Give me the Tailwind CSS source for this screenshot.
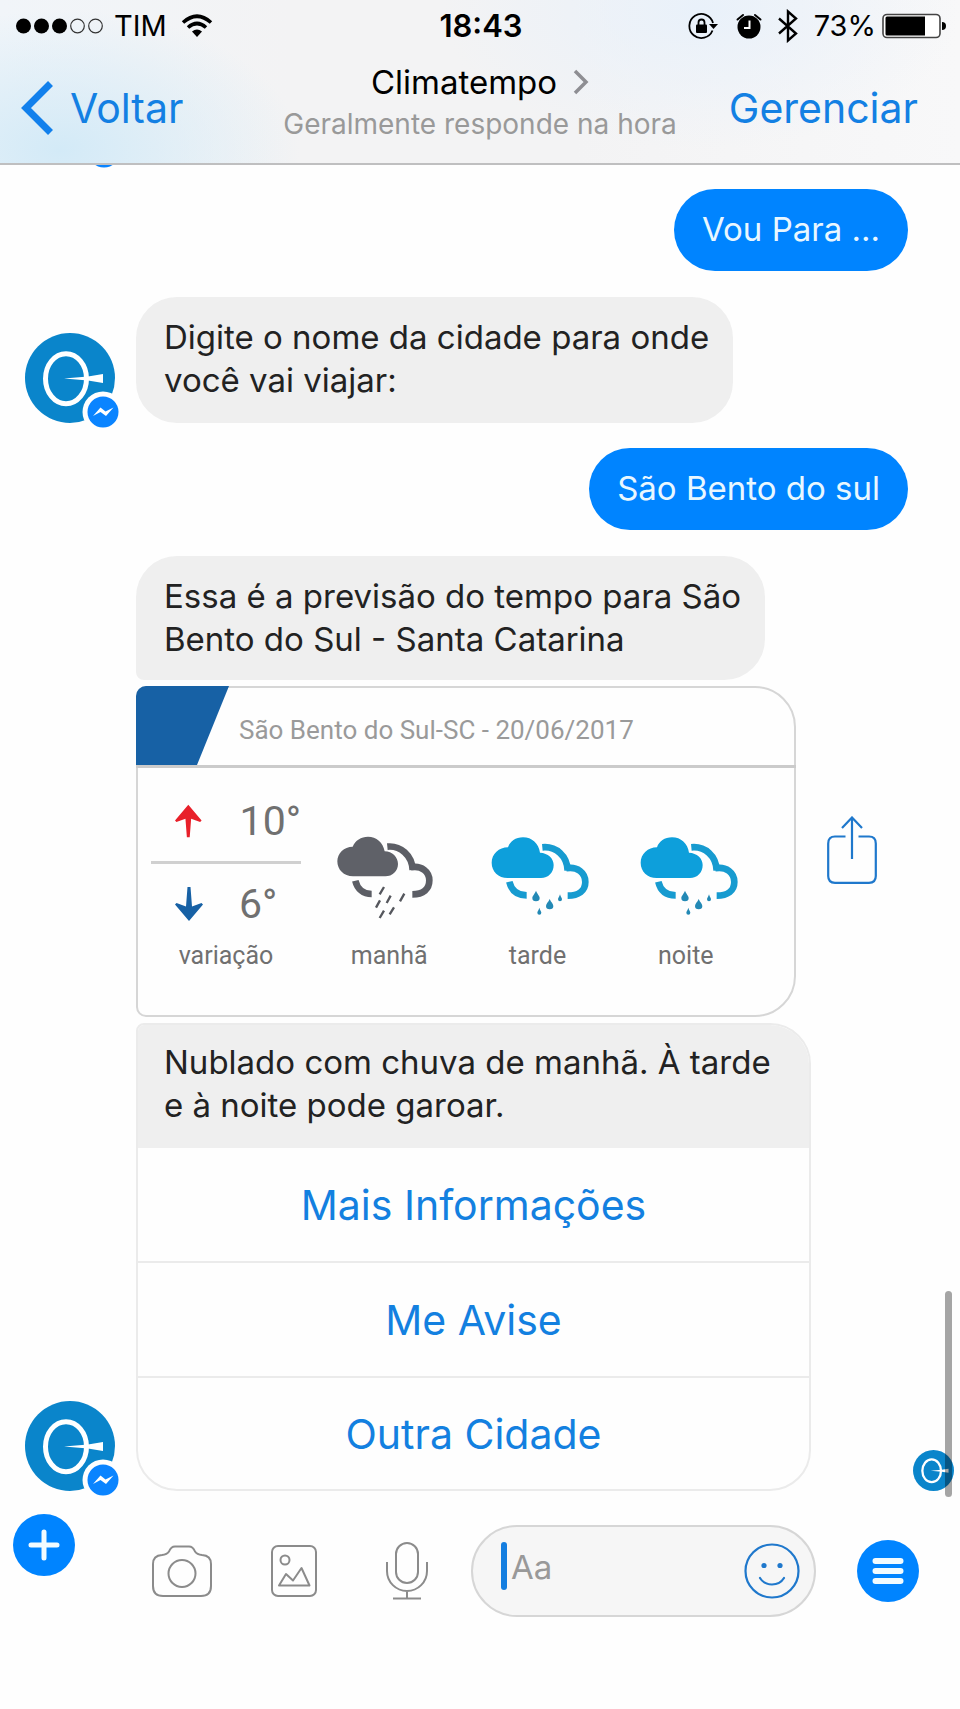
<!DOCTYPE html>
<html lang="pt-BR">
<head>
<meta charset="utf-8">
<meta name="viewport" content="width=device-width, initial-scale=1">
<title>Climatempo</title>
<script src="https://cdn.jsdelivr.net/npm/@tailwindcss/browser@4"></script>
</head>
<body class="bg-[#fefefe] font-['Inter','Liberation_Sans',sans-serif] text-[#222]">
<svg class="hidden" aria-hidden="true">
  <symbol id="logo" viewBox="0 0 90 90">
    <circle cx="45" cy="45" r="45" fill="#0a85cb"/>
    <ellipse cx="41" cy="45.700" rx="20.500" ry="25" fill="none" stroke="#fff" stroke-width="5"/>
    <path d="M39 45.500 63 43.500 78 41V50L63 47.500Z" fill="#fff"/>
  </symbol>
  <symbol id="messenger" viewBox="0 0 42 42">
    <circle cx="21" cy="21" r="20.500" fill="#fefefe"/>
    <circle cx="21" cy="21" r="15.500" fill="#0a84ff"/>
    <path d="M11 25 18.500 16.500 23.500 20.500 31.500 16.500 24 25 18.500 21Z" fill="#fff"/>
  </symbol>
  <symbol id="drizzle" viewBox="90 462 300 240">
    <path fill="#0d9fdb" d="M143 588C115 588 95 568 95 542C95 516 117 496 144 496C150 478 167 466 189 466C216 466 236 484 240 512C264 513 281 529 281 549C281 572 265 588 243 588Z"/>
    <g fill="none" stroke="#179bd0" stroke-width="20">
      <path d="M247 496C288 492 322 522 323 566"/>
      <path d="M318 559C352 552 376 573 376 600C376 626 356 641 323 641"/>
      <path d="M148 599C154 625 172 640 200 640"/>
    </g>
    <g fill="#2389b5">
      <path d="M228 626C232 637 239 641 239 648A11 10 0 0 1 217 648C217 641 224 637 228 626Z"/>
      <path d="M269 651C273 661 280 665 280 672A11 10 0 0 1 258 672C258 665 265 661 269 651Z"/>
      <path d="M300 637C302 645 306 648 306 652A6 6 0 0 1 294 652C294 648 298 645 300 637Z"/>
      <path d="M238 677C240 685 244 688 244 692A6 6 0 0 1 232 692C232 688 236 685 238 677Z"/>
    </g>
  </symbol>
</svg>

<div class="flex min-h-screen flex-col">
  <header class="relative z-10 border-b-2 border-[#bfbfc0] bg-[radial-gradient(ellipse_240px_140px_at_60px_150px,#d3eaf7,transparent),radial-gradient(ellipse_260px_140px_at_700px_10px,#e9f1fa,transparent),linear-gradient(90deg,#f1f5f9,#f3f3f4_30%,#f3f3f4_60%,#f8f8f9)]">
    <div class="grid h-[52px] grid-cols-[1fr_auto_1fr] items-center pr-[14px] pl-4 text-[29px] leading-8 text-black">
      <div class="flex items-center gap-[10px]">
        <svg class="h-4 w-[88px]" viewBox="0 0 88 16" aria-hidden="true"><g fill="#000"><circle cx="7.500" cy="8" r="7.500"/><circle cx="25.500" cy="8" r="7.500"/><circle cx="43.500" cy="8" r="7.500"/></g><g fill="none" stroke="#333" stroke-width="1.200"><circle cx="61.500" cy="8" r="6.800"/><circle cx="79.500" cy="8" r="6.800"/></g></svg>
        <span>TIM</span>
        <svg class="ml-1 h-[24px] w-[32px]" viewBox="0 0 32 24" fill="none" stroke="#000" stroke-width="3.600" aria-hidden="true"><path d="M2 8.500Q16-4 30 8.500M7 13.500Q16 5.500 25 13.500"/><path d="M11 17.500Q16 13.500 21 17.500L16 23Z" fill="#000" stroke="none"/></svg>
      </div>
      <span class="text-[31px] font-semibold">18:43</span>
      <div class="flex items-center justify-end">
        <svg class="mr-[18px] h-[28px] w-[30px]" viewBox="0 0 30 28" aria-hidden="true"><path d="M24.500 18.500A12 12 0 1 1 25 11" fill="none" stroke="#000" stroke-width="1.800"/><path d="M21 12h9l-4.500 5z"/><rect x="8" y="12.500" width="11" height="8.500" rx="1"/><path d="M10.500 13v-2.500a3 3 0 0 1 6 0V13" fill="none" stroke="#000" stroke-width="1.800"/></svg>
        <svg class="mr-4 h-[26px] w-[26px]" viewBox="0 0 26 26" aria-hidden="true"><circle cx="13" cy="14" r="11.500"/><path d="M13.500 7.500V15H8" fill="none" stroke="#fff" stroke-width="2"/><path d="M1.500 6.500 7 2M24.500 6.500 19 2" stroke="#000" stroke-width="2" stroke-linecap="round"/></svg>
        <svg class="mr-4 h-[34px] w-[20px]" viewBox="0 0 20 34" fill="none" stroke="#000" stroke-width="2.400" aria-hidden="true"><path d="M1 9.500 18 24.500 10 31.500V2.500L18 9.500 1 24.500"/></svg>
        <span>73%</span>
        <svg class="ml-[6px] h-[26px] w-[64px]" viewBox="0 0 64 26" aria-hidden="true"><rect x="1" y="1.500" width="57" height="23" rx="4" fill="#fff" stroke="#444" stroke-width="1.600"/><path d="M3.500 5q0-1.500 1.500-1.500H43V22.500H5q-1.500 0-1.500-1.500z"/><path d="M60 9q4 0 4 4t-4 4z"/></svg>
      </div>
    </div>
    <div class="grid h-[111px] grid-cols-[1fr_auto_1fr] items-start">
      <button type="button" class="mt-[28px] ml-[21px] flex items-center gap-[17px] justify-self-start text-[41px] leading-[52px] text-[#1380e3]">
        <svg class="h-[56px] w-[32px]" viewBox="0 0 32 56" fill="none" stroke="#1280ec" stroke-width="7" aria-hidden="true"><path d="M29.500 3.500 5 28 29.500 52.500"/></svg>Voltar
      </button>
      <div class="mt-[9px] flex flex-col items-center">
        <a href="#" class="flex items-center gap-4 text-[33px] leading-[42px] text-black">Climatempo
          <svg class="h-[26px] w-[16px]" viewBox="0 0 16 26" fill="none" stroke="#8e8e93" stroke-width="3.500" aria-hidden="true"><path d="M2 2 13 13 2 24"/></svg>
        </a>
        <p class="text-[28px] leading-[42px] text-[#999]">Geralmente responde na hora</p>
      </div>
      <button type="button" class="mt-[28px] mr-[42px] justify-self-end text-[41px] leading-[56px] text-[#1380e3]">Gerenciar</button>
    </div>
  </header>

  <main class="relative flex flex-col text-[33px] leading-[43px]">
    <svg class="absolute -top-[34px] left-[83px] h-[42px] w-[42px]" aria-hidden="true"><use href="#messenger"/></svg>

    <p class="mt-6 mr-[52px] self-end rounded-[41px] bg-[#0084ff] px-[28px] pt-[19px] pb-[20px] text-[#e9f7ff]">Vou Para ...</p>

    <div class="mt-[26px] flex items-end gap-[21px] pl-[25px]">
      <div class="relative h-[90px] w-[90px] shrink-0">
        <svg class="h-full w-full" role="img" aria-label="Climatempo"><use href="#logo"/></svg>
        <svg class="absolute -right-[9px] -bottom-[10px] h-[42px] w-[42px]" aria-hidden="true"><use href="#messenger"/></svg>
      </div>
      <p class="rounded-[41px] bg-[#efefef] pr-[24px] pl-[28px] pt-[19px] pb-[21px]">Digite o nome da cidade para onde<br>você vai viajar:</p>
    </div>

    <p class="mt-[25px] mr-[52px] self-end rounded-[41px] bg-[#0084ff] px-[28px] pt-[19px] pb-[20px] text-[#e9f7ff]">São Bento do sul</p>

    <div class="mt-[26px] flex items-end gap-[21px] pl-[25px]">
      <div class="relative h-[90px] w-[90px] shrink-0">
        <svg class="h-full w-full" role="img" aria-label="Climatempo"><use href="#logo"/></svg>
        <svg class="absolute -right-[9px] -bottom-[10px] h-[42px] w-[42px]" aria-hidden="true"><use href="#messenger"/></svg>
      </div>
      <div class="flex min-w-0 flex-1 flex-col items-start gap-[6px]">
        <p class="rounded-[41px] rounded-bl-[8px] bg-[#efefef] pr-[24px] pl-[28px] pt-[19px] pb-[19px]">Essa é a previsão do tempo para São<br>Bento do Sul - Santa Catarina</p>

        <div class="flex w-full items-center gap-[31px]">
          <section class="w-full max-w-[660px] rounded-l-[10px] rounded-r-[41px] border-2 border-[#d6d6d6] font-['Roboto','Liberation_Sans',sans-serif]">
            <div class="-mx-[2px] -mt-[2px] flex h-[82px] items-center border-b-3 border-[#cbcbcb]">
              <svg class="h-[79px] w-[93px] shrink-0 rounded-tl-[10px]" viewBox="0 0 93 79" aria-hidden="true"><path d="M0 0H93L61 79H0Z" fill="#1761a5"/></svg>
              <h2 class="pt-[8px] pl-[10px] text-[26px] leading-8 text-[#9a9a9a]">São Bento do Sul-SC - 20/06/2017</h2>
            </div>
            <div class="flex h-[247px] items-start pr-[34px] pl-[13px] text-[25px] leading-8 text-[#707070]">
              <div class="mr-[14px] w-[150px] shrink-0">
                <div class="flex h-[96px] items-center gap-[38px] border-b-3 border-[#d0d0d0] pt-[13px] pl-[24px] text-[41px]">
                  <svg class="h-[34px] w-[28px]" viewBox="0 0 28 34" fill="#e8202a" aria-hidden="true"><path d="M14 0 28 16.500 26.500 18 17 14.500 15.500 34H12.500L11 14.500 1.500 18 0 16.500Z"/></svg>10°
                </div>
                <div class="flex h-[76px] items-center gap-[36px] pt-[3px] pl-[24px] text-[41px]">
                  <svg class="h-[34px] w-[28px]" viewBox="0 0 28 34" fill="#1761a5" aria-hidden="true"><path d="M14 34 28 17.500 26.500 16 17 19.500 15.500 0H12.500L11 19.500 1.500 16 0 17.500Z"/></svg>6°
                </div>
                <p class="text-center">variação</p>
              </div>
              <div class="grid flex-1 grid-cols-3 pt-[68px] text-center">
                <figure class="flex flex-col items-center gap-[20px]">
                  <svg class="h-[84px] w-[106px]" viewBox="649 227 318 252" aria-hidden="true">
                    <path fill="#5f6168" d="M700 348C672 348 653 328 653 303C653 279 673 259 699 259C707 240 724 229 745 229C770 229 790 246 795 273C818 273 835 291 835 311C835 332 818 348 797 348Z"/>
                    <g fill="none" stroke="#5c5e65" stroke-width="20"><path d="M803 259C842 255 877 285 879 329"/><path d="M873 321C906 314 929 335 929 360C929 386 911 402 878 402"/><path d="M707 361C713 386 731 401 756 401"/></g>
                    <path stroke="#55575d" stroke-width="7" d="M793 380 780 402M813 406 801 428M781 420 769 442M854 400 841 423M793 451 780 473M823 441 810 462"/>
                  </svg>
                  <figcaption>manhã</figcaption>
                </figure>
                <figure class="flex flex-col items-center gap-[24px]">
                  <svg class="ml-[6px] h-[80px] w-[100px]" aria-hidden="true"><use href="#drizzle"/></svg>
                  <figcaption>tarde</figcaption>
                </figure>
                <figure class="flex flex-col items-center gap-[24px]">
                  <svg class="ml-[6px] h-[80px] w-[100px]" aria-hidden="true"><use href="#drizzle"/></svg>
                  <figcaption>noite</figcaption>
                </figure>
              </div>
            </div>
          </section>
          <button type="button" aria-label="Compartilhar" class="shrink-0 pb-[4px]">
            <svg class="h-[68px] w-[50px]" viewBox="0 0 50 68" fill="none" stroke="#1f78cc" stroke-width="2.200" aria-hidden="true"><path d="M18.500 20.500H8Q1.200 20.500 1.200 27.500V60Q1.200 66.800 8 66.800H42Q48.800 66.800 48.800 60V27.500Q48.800 20.500 42 20.500H31.500M25 43V1M15 12 25 1.500 35 12"/></svg>
          </button>
        </div>

        <section class="w-[calc(100%-149px)] max-w-[676px] overflow-hidden rounded-[41px] rounded-tl-[8px] border-2 border-[#ebebeb]">
          <p class="-mx-[2px] -mt-[2px] bg-[#efefef] px-[28px] pt-[18px] pb-[21px]">Nublado com chuva de manhã. À tarde<br>e à noite pode garoar.</p>
          <div class="flex flex-col divide-y-2 divide-[#ebebeb] text-[41px] leading-[50px] text-[#1380e0]">
            <button type="button" class="h-[115px]">Mais Informações</button>
            <button type="button" class="h-[115px]">Me Avise</button>
            <button type="button" class="h-[111px]">Outra Cidade</button>
          </div>
        </section>
      </div>
    </div>

    <svg class="absolute right-[6px] bottom-0 h-[41px] w-[41px]" role="img" aria-label="Visto"><use href="#logo"/></svg>
    <span class="absolute right-[8px] -bottom-[6px] h-[206px] w-[7px] rounded-full bg-black/35"></span>
  </main>

  <footer class="flex items-start pt-[23px] pr-[41px] pl-[13px]">
    <button type="button" aria-label="Mais" class="flex h-[62px] w-[62px] shrink-0 items-center justify-center rounded-full bg-[#0084ff]">
      <svg class="h-[32px] w-[32px]" viewBox="0 0 32 32" stroke="#f2fbff" stroke-width="5" stroke-linecap="round" aria-hidden="true"><path d="M16 3V29M3 16H29"/></svg>
    </button>
    <div class="flex min-w-0 flex-1 items-center pt-[11px]">
      <div class="ml-[77px] flex items-center">
        <button type="button" aria-label="Câmera"><svg class="h-[52px] w-[60px]" viewBox="0 0 60 52" fill="none" stroke="#8b8b8b" stroke-width="2" aria-hidden="true"><path d="M11 51Q1 51 1 41V19Q1 10.500 10 10Q15 9.500 17 6.500Q19 1.500 23 1.500H37Q41 1.500 43 6.500Q45 9.500 50 10Q59 10.500 59 19V41Q59 51 49 51Z"/><circle cx="30" cy="28.500" r="13.500"/></svg></button>
        <button type="button" aria-label="Foto" class="ml-[59px]"><svg class="h-[52px] w-[46px]" viewBox="0 0 46 52" fill="none" stroke="#8b8b8b" stroke-width="2" aria-hidden="true"><rect x="1" y="1" width="44" height="50" rx="6"/><circle cx="14" cy="15" r="4.500"/><path stroke-linejoin="round" d="M8 40.500 15 29 22 35.500 30.500 23 38.500 40.500Z"/></svg></button>
        <button type="button" aria-label="Microfone" class="ml-[69px]"><svg class="h-[58px] w-[42px]" viewBox="0 0 42 58" fill="none" stroke="#8b8b8b" stroke-width="2" aria-hidden="true"><rect x="10" y="1" width="22" height="40" rx="11"/><path d="M1 20V29A20 20 0 0 0 41 29V20M21 49V56.500M7 56.500H35"/></svg></button>
      </div>
      <div class="ml-[43px] flex h-[92px] min-w-0 flex-1 items-center rounded-full border-2 border-[#d6d6d6] bg-[#f6f6f6] pr-[14px] pl-[28px]">
        <span class="mb-[10px] h-[48px] w-[6px] shrink-0 rounded-full bg-[#147ee0]"></span>
        <input type="text" aria-label="Mensagem" placeholder="Aa" class="mb-[6px] ml-1 min-w-0 flex-1 bg-transparent text-[33px] outline-none placeholder:text-[#999]">
        <button type="button" aria-label="Emoji"><svg class="h-[56px] w-[56px]" viewBox="0 0 56 56" fill="none" stroke="#1f78cc" stroke-width="2.200" aria-hidden="true"><circle cx="28" cy="28" r="26.500"/><path stroke-linecap="round" d="M16 35Q20 41.500 28 41.500T40 35"/><g fill="#1f78cc" stroke="none"><circle cx="20" cy="22.500" r="2.600"/><circle cx="36" cy="22.500" r="2.600"/></g></svg></button>
      </div>
      <button type="button" aria-label="Menu" class="ml-[41px] flex h-[62px] w-[62px] shrink-0 items-center justify-center rounded-full bg-[#0084ff]">
        <svg class="h-[28px] w-[32px]" viewBox="0 0 32 28" stroke="#f2fbff" stroke-width="6" stroke-linecap="round" aria-hidden="true"><path d="M3.500 4H28.500M3.500 14H28.500M3.500 24H28.500"/></svg>
      </button>
    </div>
  </footer>
</div>
</body>
</html>
